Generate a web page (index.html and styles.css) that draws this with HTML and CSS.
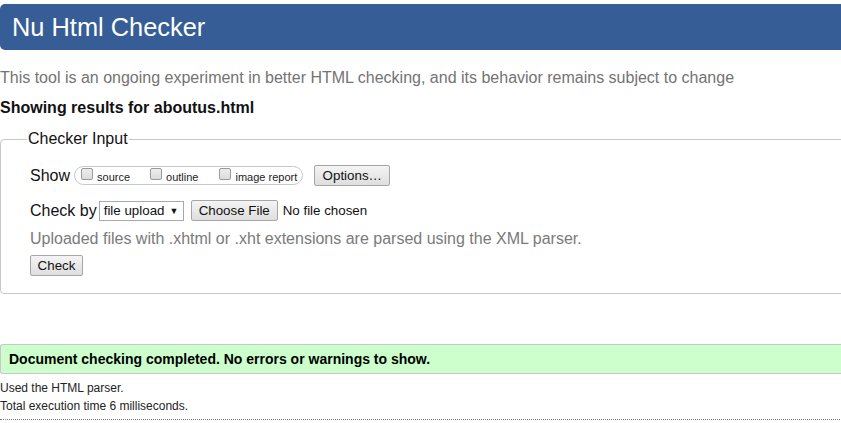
FILE: index.html
```html
<!DOCTYPE html>
<html>
<head>
<meta charset="utf-8">
<title>Nu Html Checker</title>
<link rel="stylesheet" href="styles.css">
</head>
<body>
<div class="page">
  <h1 class="title">Nu Html Checker</h1>
  <p class="intro">This tool is an ongoing experiment in better HTML checking, and its behavior remains subject to change</p>
  <p class="showing">Showing results for aboutus.html</p>
  <fieldset class="checker">
    <legend class="legend">Checker Input</legend>
    <div class="row">
      <span class="label">Show</span>
      <span class="pill">
        <label class="opt opt-source"><span class="cb"></span>source</label>
        <label class="opt opt-outline"><span class="cb"></span>outline</label>
        <label class="opt"><span class="cb"></span>image report</label>
      </span>
      <span class="btn btn-options">Options…</span>
    </div>
    <div class="row row-check">
      <span class="label label-check">Check by</span>
      <span class="select">file upload <span class="arrow">▼</span></span>
      <span class="btn btn-file">Choose File</span>
      <span class="nofile">No file chosen</span>
    </div>
    <p class="hint">Uploaded files with .xhtml or .xht extensions are parsed using the XML parser.</p>
    <span class="btn btn-check">Check</span>
  </fieldset>
  <p class="success">Document checking completed. No errors or warnings to show.</p>
  <p class="details">Used the HTML parser.</p>
  <p class="details">Total execution time 6 milliseconds.</p>
  <hr class="rule">
</div>
</body>
</html>
```
FILE: styles.css
```css
html, body {
  margin: 0;
  padding: 0;
  background: #fff;
  overflow: hidden;
}
body {
  font-family: "Liberation Sans", Arial, sans-serif;
  color: #000;
}
.page {
  width: 870px;
  padding-top: 4px;
}
.title {
  margin: 0;
  height: 46px;
  box-sizing: border-box;
  background: #365d95;
  color: #fff;
  font-weight: normal;
  font-size: 25.4px;
  line-height: 46px;
  padding-left: 12px;
  border-radius: 5px 0 0 5px;
}
.intro {
  margin: 19px 0 0;
  font-size: 16px;
  line-height: 18px;
  color: #737373;
}
.showing {
  margin: 12px 0 0;
  font-size: 16px;
  font-weight: bold;
  line-height: 18px;
  color: #111;
}
.checker {
  margin: 13px 0 0;
  padding: 17px 0 17px 29px;
  border: 1px solid #c8c8c8;
  border-radius: 4px 0 0 4px;
  min-width: 0;
}
.legend {
  font-size: 16px;
  padding: 0 1px;
  margin-left: -3px;
  color: #111;
}
.row {
  display: flex;
  align-items: center;
  height: 21px;
}
.row-check {
  margin-top: 14px;
}
.label {
  font-size: 16px;
  color: #111;
  margin-right: 4px;
}
.label-check {
  margin-right: 2px;
}
.pill {
  display: inline-flex;
  align-items: center;
  height: 19px;
  box-sizing: border-box;
  border: 1px solid #c8c8c8;
  border-radius: 10px;
  padding: 0 5px 0 6px;
  margin-right: 11px;
}
.opt {
  display: inline-flex;
  align-items: center;
  font-size: 11px;
  color: #222;
  padding-top: 3px;
}
.opt-source {
  margin-right: 20px;
}
.opt-outline {
  margin-right: 21px;
}
.cb {
  width: 12px;
  height: 12px;
  box-sizing: border-box;
  border: 1px solid #9a9a9a;
  border-radius: 2px;
  background: linear-gradient(#ededed, #dcdcdc);
  margin-right: 4px;
  margin-top: -7px;
}
.btn {
  display: inline-flex;
  align-items: center;
  justify-content: center;
  box-sizing: border-box;
  border: 1px solid #a6a6a6;
  border-radius: 2px;
  background: linear-gradient(#f4f4f4, #dedede);
  font-size: 13.33px;
  color: #111;
}
.btn-options {
  width: 76px;
  height: 21px;
}
.select {
  display: inline-flex;
  align-items: center;
  box-sizing: border-box;
  height: 20px;
  width: 85px;
  border: 1px solid #a9a9a9;
  font-size: 13.33px;
  padding-left: 4px;
  margin-right: 7px;
  color: #111;
}
.arrow {
  font-size: 9px;
  margin-left: 5px;
}
.btn-file {
  width: 87px;
  height: 21px;
}
.nofile {
  font-size: 13.33px;
  margin-left: 5px;
  color: #111;
}
.hint {
  margin: 9px 0 0;
  font-size: 16px;
  line-height: 18px;
  color: #7a7a7a;
}
.btn-check {
  margin-top: 7px;
  width: 53px;
  height: 21px;
}
.success {
  margin: 50px 0 0;
  height: 30px;
  box-sizing: border-box;
  background: #ccffcc;
  border: 1px solid #c8c8c8;
  border-right: 0;
  border-radius: 3px 0 0 3px;
  font-size: 14px;
  font-weight: bold;
  line-height: 28px;
  padding-left: 8px;
}
.details {
  margin: 7px 0 0;
  font-size: 12px;
  line-height: 14px;
  color: #222;
}
.details + .details {
  margin-top: 4px;
}
.rule {
  margin: 6px 0 0;
  border: 0;
  border-top: 1px dotted #777;
  height: 0;
}
```
